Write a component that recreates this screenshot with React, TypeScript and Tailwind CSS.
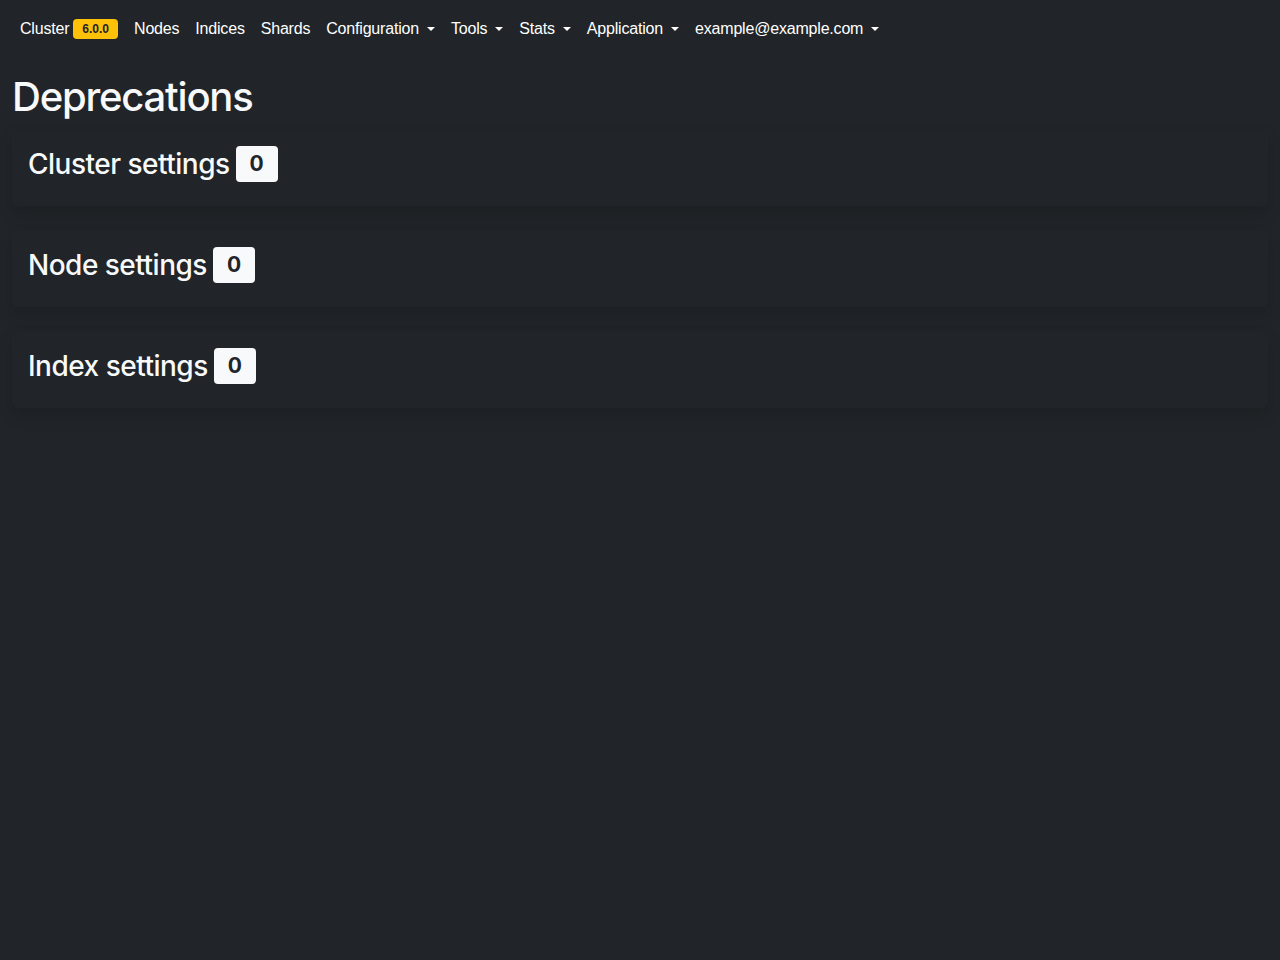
import React from 'react';

const navItems: { label: string; caret?: boolean }[] = [
  { label: 'Nodes' },
  { label: 'Indices' },
  { label: 'Shards' },
  { label: 'Configuration', caret: true },
  { label: 'Tools', caret: true },
  { label: 'Stats', caret: true },
  { label: 'Application', caret: true },
  { label: 'example@example.com', caret: true },
];

const sections = ['Cluster settings', 'Node settings', 'Index settings'];

function Caret() {
  return (
    <span className="ml-[8px] inline-block h-0 w-0 border-x-[4px] border-t-[4px] border-x-transparent border-t-white" />
  );
}

export default function App() {
  return (
    <div
      className="min-h-[960px] bg-[#212529] text-[#f8f9fa]"
      style={{ fontFamily: 'Inter, "Noto Sans", sans-serif' }}
    >
      <nav
        className="flex h-14 items-center px-3 pt-[2px] text-base tracking-[-0.012em]"
        style={{ fontFamily: '"Liberation Sans", Arial, sans-serif' }}
      >
        <a className="flex items-center px-2 text-white">
          Cluster
          <span className="ml-[4px] rounded-[4px] bg-[#ffc107] px-[9px] py-[4px] text-[12px] font-bold leading-[12px] tracking-normal text-[#212529]">
            6.0.0
          </span>
        </a>
        {navItems.map((item) => (
          <a key={item.label} className="flex items-center px-2 text-white">
            {item.label}
            {item.caret && <Caret />}
          </a>
        ))}
      </nav>

      <div className="px-3">
        <h1 className="mt-[17px] text-[40px] font-medium leading-[48px] tracking-[-0.03em]">
          Deprecations
        </h1>
        <div className="mt-[9px]">
          {sections.map((s) => (
            <div
              key={s}
              className="mb-[25px] rounded-md bg-[#212529] px-4 pt-4 pb-6 shadow-[0_8px_16px_rgba(0,0,0,0.15)]"
            >
              <h3 className="flex items-center text-[28px] font-medium leading-[36px] tracking-[-0.018em]">
                {s}
                <span className="ml-[6px] rounded-[4px] bg-[#f8f9fa] px-[14px] py-[7px] text-[21px] font-bold leading-[22px] tracking-normal text-[#212529]">
                  0
                </span>
              </h3>
            </div>
          ))}
        </div>
      </div>
    </div>
  );
}
